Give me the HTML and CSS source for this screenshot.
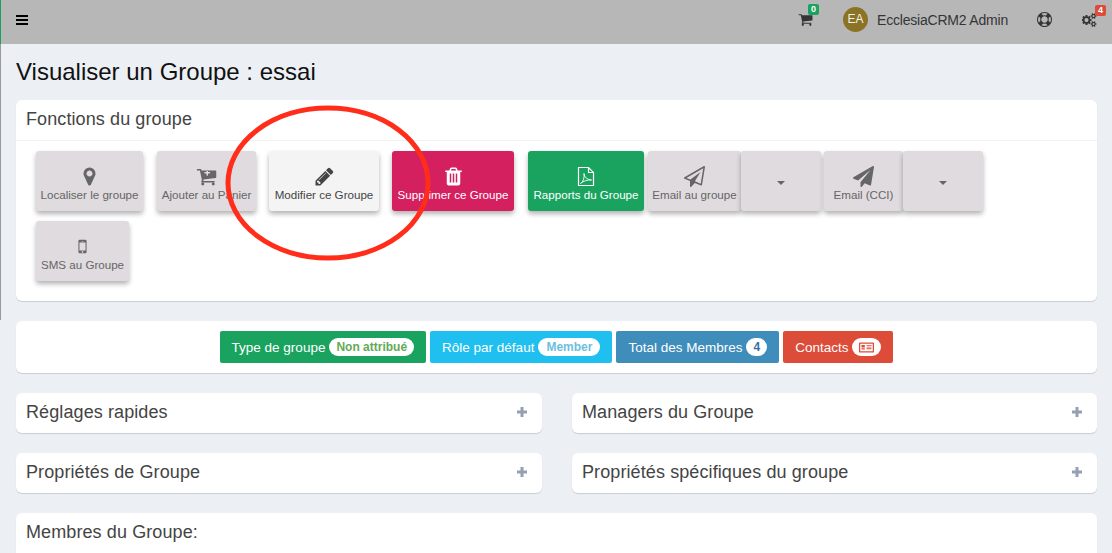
FILE: index.html
```html
<!DOCTYPE html>
<html lang="fr">
<head>
  <meta charset="UTF-8">
  <title>Visualiser un Groupe : essai</title>
  <link rel="stylesheet" href="styles.css">
</head>
<body>
  <svg width="0" height="0" class="defs">
    <symbol id="i-marker" viewBox="0 0 1792 1792"><path d="M1152 640q0-106-75-181t-181-75-181 75-75 181 75 181 181 75 181-75 75-181zm256 0q0 109-33 179l-364 774q-16 33-47.500 52t-67.500 19-67.500-19-47.500-52l-364-774q-33-70-33-179 0-212 150-362t362-150 362 150 150 362z"/></symbol>
    <symbol id="i-cartplus" viewBox="0 0 1792 1792"><path d="M1216 576q0-26-19-45t-45-19h-128v-128q0-26-19-45t-45-19-45 19-19 45v128h-128q-26 0-45 19t-19 45 19 45 45 19h128v128q0 26 19 45t45 19 45-19 19-45v-128h128q26 0 45-19t19-45zm-512 960q0 52-38 90t-90 38-90-38-38-90 38-90 90-38 90 38 38 90zm896 0q0 52-38 90t-90 38-90-38-38-90 38-90 90-38 90 38 38 90zm128-1088v512q0 24-16 42.500t-41 21.500l-1044 122q1 7 4.500 21.500t6 26.500 2.500 22q0 16-24 64h920q26 0 45 19t19 45-19 45-45 19h-1024q-26 0-45-19t-19-45q0-14 11-39.500t29.500-59.500 20.500-38l-177-823h-204q-26 0-45-19t-19-45 19-45 45-19h256q16 0 28.500 6.500t20 15.500 13 24.500 7.500 26.500 5.500 29.500 4.500 25.500h1201q26 0 45 19t19 45z"/></symbol>
    <symbol id="i-cart" viewBox="0 0 1792 1792"><path d="M704 1536q0 52-38 90t-90 38-90-38-38-90 38-90 90-38 90 38 38 90zm896 0q0 52-38 90t-90 38-90-38-38-90 38-90 90-38 90 38 38 90zm128-1088v512q0 24-16.500 42.500t-40.500 21.500l-1044 122q13 60 13 70 0 16-24 64h920q26 0 45 19t19 45-19 45-45 19h-1024q-26 0-45-19t-19-45q0-11 8-31.500t16-36 21.500-40 15.500-29.500l-177-823h-204q-26 0-45-19t-19-45 19-45 45-19h256q16 0 28.500 6.500t19.500 15.500 13 24.500 8 26 5.500 29.500 4.500 26h1201q26 0 45 19t19 45z"/></symbol>
    <symbol id="i-pencil" viewBox="0 0 1792 1792"><path d="M491 1536l91-91-235-235-91 91v107h128v128h107zm523-928q0-22-22-22-10 0-17 7l-542 542q-7 7-7 17 0 22 22 22 10 0 17-7l542-542q7-7 7-17zm-54-192l416 416-832 832h-416v-416zm683 96q0 53-37 90l-166 166-416-416 166-165q36-38 90-38 53 0 91 38l235 234q37 39 37 91z"/></symbol>
    <symbol id="i-trash" viewBox="0 0 1792 1792"><path d="M704 1376v-704q0-14-9-23t-23-9h-64q-14 0-23 9t-9 23v704q0 14 9 23t23 9h64q14 0 23-9t9-23zm256 0v-704q0-14-9-23t-23-9h-64q-14 0-23 9t-9 23v704q0 14 9 23t23 9h64q14 0 23-9t9-23zm256 0v-704q0-14-9-23t-23-9h-64q-14 0-23 9t-9 23v704q0 14 9 23t23 9h64q14 0 23-9t9-23zm-544-992h448l-48-117q-7-9-17-11h-317q-10 2-17 11zm928 32v64q0 14-9 23t-23 9h-96v948q0 83-47 143.500t-113 60.500h-832q-66 0-113-58.500t-47-141.500v-952h-96q-14 0-23-9t-9-23v-64q0-14 9-23t23-9h309l70-167q15-37 54-63t79-26h320q40 0 79 26t54 63l70 167h309q14 0 23 9t9 23z"/></symbol>
    <symbol id="i-plane-o" viewBox="0 0 1792 1792"><path d="M1764 11q33 24 27 64l-256 1536q-5 29-32 45-14 8-31 8-11 0-24-5l-527-215-298 327q-18 21-47 21-14 0-23-4-19-7-30-23.500t-11-36.500v-452l-472-193q-37-14-40-55-3-39 32-59l1664-960q35-21 68 2zm-342 1499l221-1323-1434 827 336 137 863-639-478 797z"/></symbol>
    <symbol id="i-plane" viewBox="0 0 1792 1792"><path d="M1764 11q33 24 27 64l-256 1536q-5 29-32 45-14 8-31 8-11 0-24-5l-453-185-242 295q-18 23-49 23-13 0-22-4-19-7-30.500-23.500t-11.500-36.500v-349l864-1059-1069 925-395-162q-37-14-40-55-2-40 32-59l1664-960q15-9 32-9 20 0 36 11z"/></symbol>
    <symbol id="i-mobile" viewBox="0 0 1792 1792"><path d="M976 1408q0-33-23.500-56.500t-56.500-23.500-56.500 23.500-23.500 56.500 23.500 56.500 56.500 23.500 56.500-23.500 23.500-56.500zm208-160v-704q0-13-9.500-22.500t-22.500-9.500h-512q-13 0-22.500 9.500t-9.500 22.500v704q0 13 9.500 22.500t22.500 9.500h512q13 0 22.500-9.500t9.500-22.500zm-192-848q0-16-16-16h-160q-16 0-16 16t16 16h160q16 0 16-16zm288-16v1024q0 52-38 90t-90 38h-512q-52 0-90-38t-38-90v-1024q0-52 38-90t90-38h512q52 0 90 38t38 90z"/></symbol>
    <symbol id="i-ring" viewBox="0 0 1792 1792"><path d="M896 0q182 0 348 71t286 191 191 286 71 348-71 348-191 286-286 191-348 71-348-71-286-191-191-286-71-348 71-348 191-286 286-191 348-71zm0 128q-190 0-361 90l194 194q82-28 167-28t167 28l194-194q-171-90-361-90zm-678 1129l194-194q-28-82-28-167t28-167l-194-194q-90 171-90 361t90 361zm678 407q190 0 361-90l-194-194q-82 28-167 28t-167-28l-194 194q171 90 361 90zm0-384q159 0 271.500-112.500t112.500-271.500-112.500-271.500-271.500-112.500-271.500 112.500-112.500 271.500 112.500 271.500 271.500 112.500zm484-217l194 194q90-171 90-361t-90-361l-194 194q28 82 28 167t-28 167z"/></symbol>
    <symbol id="i-cogs" viewBox="0 0 2048 1792"><path d="M832 896q0-106-75-181t-181-75-181 75-75 181 75 181 181 75 181-75 75-181zm768 512q0-52-38-90t-90-38-90 38-38 90q0 53 37.500 90.500t90.500 37.500 90.500-37.500 37.500-90.500zm0-1024q0-52-38-90t-90-38-90 38-38 90q0 53 37.500 90.500t90.500 37.500 90.500-37.500 37.500-90.500zm-384 421v185q0 10-7 19.500t-16 10.500l-155 24q-11 35-32 76 34 48 90 115 7 11 7 20 0 12-7 19-23 30-82.500 89.500t-78.500 59.500q-11 0-21-7l-115-90q-37 19-77 31-11 108-23 155-7 24-30 24h-186q-11 0-20-7.500t-10-17.500l-23-153q-34-10-75-31l-118 89q-7 7-20 7-11 0-21-8-144-133-144-160 0-9 7-19 10-14 41-53t47-61q-23-44-35-82l-152-24q-10-1-17-9.500t-7-19.500v-185q0-10 7-19.500t16-10.500l155-24q11-35 32-76-34-48-90-115-7-11-7-20 0-12 7-20 22-30 82-89t79-59q11 0 21 7l115 90q34-18 77-32 11-108 23-154 7-24 30-24h186q11 0 20 7.500t10 17.500l23 153q34 10 75 31l118-89q8-7 20-7 11 0 21 8 144 133 144 160 0 8-7 19-12 16-42 54t-45 60q23 48 34 82l152 23q10 2 17 10.500t7 19.500zm640 533v140q0 16-149 31-12 27-30 52 51 113 51 138 0 4-4 7-122 71-124 71-8 0-46-47t-52-68q-20 2-30 2t-30-2q-14 21-52 68t-46 47q-2 0-124-71-4-3-4-7 0-25 51-138-18-25-30-52-149-15-149-31v-140q0-16 149-31 13-29 30-52-51-113-51-138 0-4 4-7 4-2 35-20t59-34 30-16q8 0 46 46.500t52 67.500q20-2 30-2t30 2q51-71 92-112l6-2q4 0 124 70 4 3 4 7 0 25-51 138 17 23 30 52 149 15 149 31zm0-1024v140q0 16-149 31-12 27-30 52 51 113 51 138 0 4-4 7-122 71-124 71-8 0-46-47t-52-68q-20 2-30 2t-30-2q-14 21-52 68t-46 47q-2 0-124-71-4-3-4-7 0-25 51-138-18-25-30-52-149-15-149-31v-140q0-16 149-31 13-29 30-52-51-113-51-138 0-4 4-7 4-2 35-20t59-34 30-16q8 0 46 46.500t52 67.500q20-2 30-2t30 2q51-71 92-112l6-2q4 0 124 70 4 3 4 7 0 25-51 138 17 23 30 52 149 15 149 31z"/></symbol>
    <symbol id="i-pdf" viewBox="0 0 18 20"><path class="line" d="M1.500 1h10l5 5v13h-15zM11.500 1v5h5"/><path class="line thin" d="M3.500 17c3-2 4-6 3.500-10 .5 4 3 6 7.500 6.500-4-.5-8 1-11 3.500z"/></symbol>
    <symbol id="i-plus" viewBox="0 0 10 10"><path d="M3.500 0h3v3.500H10v3H6.500V10h-3V6.500H0v-3h3.500z"/></symbol>
  </svg>

  <header class="topbar">
    <svg class="bars" width="12" height="10" viewBox="0 0 12 10"><path d="M0 0h12v2H0zM0 4h12v2H0zM0 8h12v2H0z"/></svg>
    <div class="topbar-right">
      <span class="cart">
        <svg width="15" height="15"><use href="#i-cart"/></svg>
        <span class="count green">0</span>
      </span>
      <span class="avatar">EA</span>
      <span class="username">EcclesiaCRM2 Admin</span>
      <svg class="ring" width="15" height="15"><use href="#i-ring"/></svg>
      <span class="cogs">
        <svg width="16" height="14"><use href="#i-cogs"/></svg>
        <span class="count red">4</span>
      </span>
    </div>
  </header>

  <main class="content">
    <h1>Visualiser un Groupe : essai</h1>

    <section class="card functions">
      <h3 class="card-title bordered">Fonctions du groupe</h3>
      <div class="app-buttons">
        <a class="app w-107"><svg width="21" height="21"><use href="#i-marker"/></svg>Localiser le groupe</a>
        <a class="app w-99 nudge"><svg width="21" height="21"><use href="#i-cartplus"/></svg>Ajouter au Panier</a>
        <a class="app w-110 light"><svg width="21" height="21"><use href="#i-pencil"/></svg>Modifier ce Groupe</a>
        <a class="app w-122 pink"><svg width="21" height="21"><use href="#i-trash"/></svg>Supprimer ce Groupe</a>
        <a class="app w-116 green nudge"><svg width="18" height="21"><use href="#i-pdf"/></svg>Rapports du Groupe</a>
        <div class="split first">
          <a class="app w-93"><svg width="21" height="21"><use href="#i-plane-o"/></svg>Email au groupe</a>
          <a class="app w-80 caret-btn"><span class="caret"></span></a>
        </div>
        <div class="split">
          <a class="app w-79"><svg width="21" height="21"><use href="#i-plane"/></svg>Email (CCI)</a>
          <a class="app w-80 caret-btn"><span class="caret"></span></a>
        </div>
        <a class="app w-93"><svg width="19" height="21"><use href="#i-mobile"/></svg>SMS au Groupe</a>
      </div>
    </section>

    <section class="card labels">
      <span class="tag green">Type de groupe <b class="pill t-green">Non attribué</b></span>
      <span class="tag cyan">Rôle par défaut <b class="pill t-cyan">Member</b></span>
      <span class="tag blue">Total des Membres <b class="pill t-blue">4</b></span>
      <span class="tag red">Contacts
        <b class="pill t-red">
          <svg width="15" height="11" viewBox="0 0 18 12"><path d="M1 0h16a1 1 0 0 1 1 1v10a1 1 0 0 1-1 1H1a1 1 0 0 1-1-1V1a1 1 0 0 1 1-1zm.500 1.500v9h15v-9zM3 3h4v3H3zM3 7h4v1.500H3zM9 3h6v1H9zM9 5h6v1H9zM9 7h6v1H9z"/></svg>
        </b>
      </span>
    </section>

    <div class="boxes">
      <section class="card box"><h3 class="card-title">Réglages rapides</h3><svg class="plus" width="10" height="10"><use href="#i-plus"/></svg></section>
      <section class="card box"><h3 class="card-title">Managers du Groupe</h3><svg class="plus" width="10" height="10"><use href="#i-plus"/></svg></section>
      <section class="card box"><h3 class="card-title">Propriétés de Groupe</h3><svg class="plus" width="10" height="10"><use href="#i-plus"/></svg></section>
      <section class="card box"><h3 class="card-title">Propriétés spécifiques du groupe</h3><svg class="plus" width="10" height="10"><use href="#i-plus"/></svg></section>
    </div>

    <section class="card members">
      <h3 class="card-title">Membres du Groupe:</h3>
    </section>
  </main>

  <!-- annotation drawn over the screenshot -->
  <svg class="annotation" width="230" height="180" viewBox="0 0 230 180">
    <ellipse cx="114" cy="89" rx="100" ry="75"/>
  </svg>
</body>
</html>
```

FILE: styles.css
```css
* {
  box-sizing: border-box;
}
html, body {
  height: 553px;
  overflow: hidden;
}
body {
  margin: 0;
  background-color: #ecf0f5;
  color: #3d4852;
  font-family: "Liberation Sans", Arial, sans-serif;
  position: relative;
}
/* thin grey edge of the sidebar */
body::before {
  content: "";
  position: absolute;
  left: 0;
  top: 44px;
  width: 1px;
  height: 276px;
  background-color: #9a9a9a;
}
.defs {
  position: absolute;
}
svg {
  fill: currentColor;
}
.topbar {
  height: 44px;
  background-color: #b7b7b7;
  border-left: 1px solid #1aa35f;
  display: flex;
  align-items: center;
  justify-content: space-between;
  padding: 0 14px 5px 15px;
}
.bars {
  color: #000;
}
.topbar-right {
  display: flex;
  align-items: center;
  color: #353535;
}
.cart, .cogs {
  position: relative;
  display: flex;
}
.count {
  position: absolute;
  width: 11px;
  height: 11px;
  top: -8px;
  right: -6px;
  border-radius: 2px;
  color: #fff;
  font-size: 9px;
  font-weight: bold;
  line-height: 11px;
  text-align: center;
}
.cogs .count {
  right: -8px;
}
.count.green {
  background-color: #1aa35f;
}
.count.red {
  background-color: #dd4b39;
}
.avatar {
  width: 25px;
  height: 25px;
  margin-left: 30px;
  border-radius: 50%;
  background-color: #8a7424;
  color: #eee;
  font-size: 12px;
  line-height: 25px;
  text-align: center;
}
.username {
  margin-left: 9px;
  font-size: 14px;
  letter-spacing: -0.2px;
}
.ring {
  margin-left: 29px;
}
.cogs {
  margin-left: 30px;
}
.content {
  padding: 0 15px 0 16px;
}
h1 {
  margin: 0;
  padding: 13px 0 0;
  height: 56px;
  font-size: 24px;
  font-weight: normal;
  line-height: 29px;
  color: #111;
}
.card {
  background-color: #fff;
  border-radius: 6px;
  box-shadow: 0 1px 1px rgba(0, 0, 0, 0.15);
}
.card-title {
  margin: 0;
  padding: 0 10px 2px;
  font-size: 18px;
  font-weight: normal;
  line-height: 38px;
  letter-spacing: 0.1px;
  color: #444;
}
.card-title.bordered {
  height: 41px;
  border-bottom: 1px solid #f2f2f2;
}
.functions {
  height: 201px;
}
.app-buttons {
  display: flex;
  flex-wrap: wrap;
  gap: 10px 13px;
  padding: 10px 20px 0;
}
.app {
  height: 60px;
  padding-top: 15px;
  display: flex;
  flex-direction: column;
  align-items: center;
  border-radius: 3px;
  background-color: #dfdbde;
  box-shadow: 0 3px 5px rgba(0, 0, 0, 0.3);
  color: #666;
  font-size: 11.600px;
  line-height: 15px;
  white-space: nowrap;
}
.app svg {
  flex: none;
}
.nudge {
  margin-left: 1px;
}
.w-107 { width: 107px; }
.w-99 { width: 99px; }
.w-110 { width: 110px; }
.w-122 { width: 122px; }
.w-116 { width: 116px; }
.w-93 { width: 93px; }
.w-80 { width: 80px; }
.w-79 { width: 79px; }
.app.light {
  background-color: #f4f4f4;
  color: #444;
}
.app.pink {
  background-color: #d5205f;
  color: #fff;
}
.app.green {
  background-color: #1aa35f;
  color: #fff;
}
.line {
  fill: none;
  stroke: currentColor;
  stroke-width: 1.200;
}
.line.thin {
  stroke-width: 0.900;
}
.split {
  display: flex;
  margin-left: -9px;
}
.split + .split {
  margin-left: -10px;
}
.caret-btn {
  justify-content: center;
  padding-top: 4px;
}
.caret {
  border-top: 4px solid #666;
  border-left: 4px solid transparent;
  border-right: 4px solid transparent;
}
.labels {
  height: 52px;
  margin-top: 20px;
  display: flex;
  justify-content: center;
  align-items: center;
  gap: 4px;
}
.tag {
  height: 32px;
  padding: 0 12px;
  display: flex;
  align-items: center;
  gap: 4px;
  border-radius: 2px;
  color: #fff;
  font-size: 13.500px;
  white-space: nowrap;
}
.tag.green {
  background-color: #1aa35f;
}
.tag.cyan {
  background-color: #1fc0ef;
}
.tag.blue {
  background-color: #3f8dbb;
}
.tag.red {
  background-color: #dd4b39;
}
.pill {
  height: 18px;
  padding: 0 7px;
  border-radius: 9px;
  background-color: #fff;
  font-size: 12px;
  line-height: 18px;
}
.t-green {
  color: #5fab55;
}
.t-cyan {
  color: #6cbfe0;
  padding: 0 8px;
}
.t-blue {
  color: #3b6ea5;
}
.t-red {
  color: #dd4b39;
  padding: 0 7px;
  display: flex;
  align-items: center;
}
.boxes {
  margin-top: 20px;
  display: grid;
  grid-template-columns: 526px 525px;
  gap: 20px 30px;
}
.box {
  height: 40px;
  display: flex;
  align-items: center;
  justify-content: space-between;
  padding-right: 15px;
}
.plus {
  color: #97a0b3;
  margin-bottom: 3px;
}
.members {
  height: 60px;
  margin-top: 20px;
}
.annotation {
  position: absolute;
  left: 214px;
  top: 94px;
  fill: none;
  stroke: #ff2d1a;
  stroke-width: 5;
}
```
